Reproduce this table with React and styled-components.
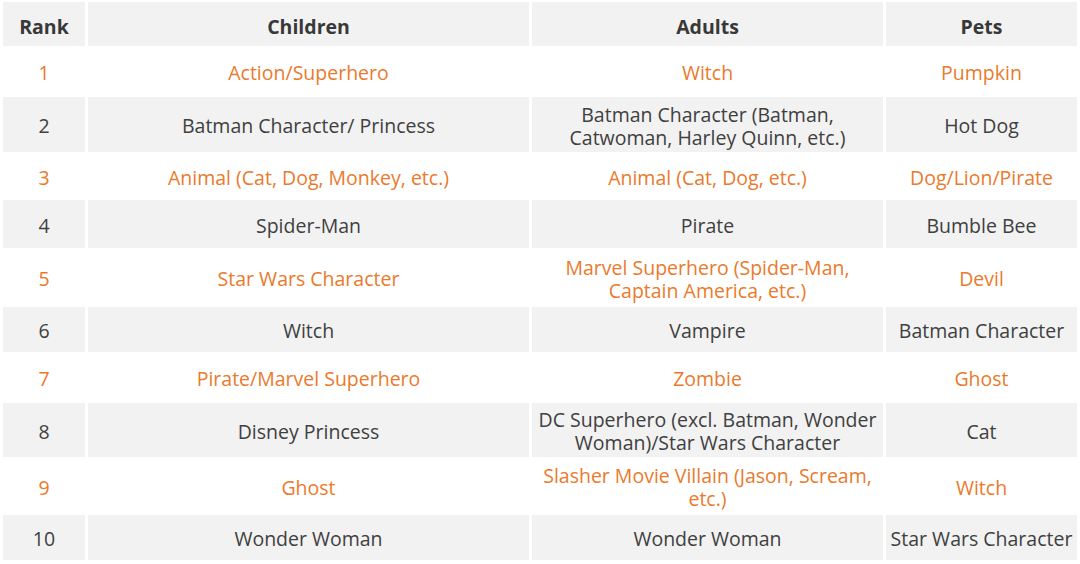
import React from "react";
import styled, { createGlobalStyle } from "styled-components";

const GlobalStyle = createGlobalStyle`
  body {
    margin: 0;
    background: #ffffff;
    font-family: "Open Sans", "Noto Sans", sans-serif;
  }
`;

const Wrap = styled.div`
  padding: 2px 4px 0 3px;
`;

const Table = styled.table`
  width: 100%;
  border-collapse: separate;
  border-spacing: 3px 0;
  margin: 0 -3px;
  table-layout: fixed;
`;

const Head = styled.th`
  height: 40px;
  padding: 4px 0 0;
  background: #f2f2f2;
  color: #383838;
  font-weight: 700;
  font-size: 19.5px;
  text-align: center;
  vertical-align: middle;
`;

const Cell = styled.td`
  height: ${(p) => p.$h - 2}px;
  padding: 2px 4px 0;
  background: ${(p) => (p.$hi ? "#ffffff" : "#f2f2f2")};
  color: ${(p) => (p.$hi ? "#ea7a2c" : "#404040")};
  font-size: 19.5px;
  line-height: 23px;
  text-align: center;
  vertical-align: middle;
`;

const rows = [
  ["1", "Action/Superhero", "Witch", "Pumpkin", 51],
  ["2", "Batman Character/ Princess", "Batman Character (Batman, Catwoman, Harley Quinn, etc.)", "Hot Dog", 55],
  ["3", "Animal (Cat, Dog, Monkey, etc.)", "Animal (Cat, Dog, etc.)", "Dog/Lion/Pirate", 48],
  ["4", "Spider-Man", "Pirate", "Bumble Bee", 48],
  ["5", "Star Wars Character", "Marvel Superhero (Spider-Man, Captain America, etc.)", "Devil", 59],
  ["6", "Witch", "Vampire", "Batman Character", 45],
  ["7", "Pirate/Marvel Superhero", "Zombie", "Ghost", 51],
  ["8", "Disney Princess", "DC Superhero (excl. Batman, Wonder Woman)/Star Wars Character", "Cat", 54],
  ["9", "Ghost", "Slasher Movie Villain (Jason, Scream, etc.)", "Witch", 58],
  ["10", "Wonder Woman", "Wonder Woman", "Star Wars Character", 45],
];

export default function App() {
  return (
    <Wrap>
      <GlobalStyle />
      <Table>
        <colgroup>
          <col style={{ width: 82 }} />
          <col style={{ width: 441 }} />
          <col style={{ width: 351 }} />
          <col style={{ width: 191 }} />
        </colgroup>
        <thead>
          <tr>
            <Head>Rank</Head>
            <Head>Children</Head>
            <Head>Adults</Head>
            <Head>Pets</Head>
          </tr>
        </thead>
        <tbody>
          {rows.map(([rank, kids, adults, pets, h], i) => {
            const hi = i % 2 === 0;
            return (
              <tr key={rank}>
                <Cell $h={h} $hi={hi}>{rank}</Cell>
                <Cell $h={h} $hi={hi}>{kids}</Cell>
                <Cell $h={h} $hi={hi}>{adults}</Cell>
                <Cell $h={h} $hi={hi}>{pets}</Cell>
              </tr>
            );
          })}
        </tbody>
      </Table>
    </Wrap>
  );
}
